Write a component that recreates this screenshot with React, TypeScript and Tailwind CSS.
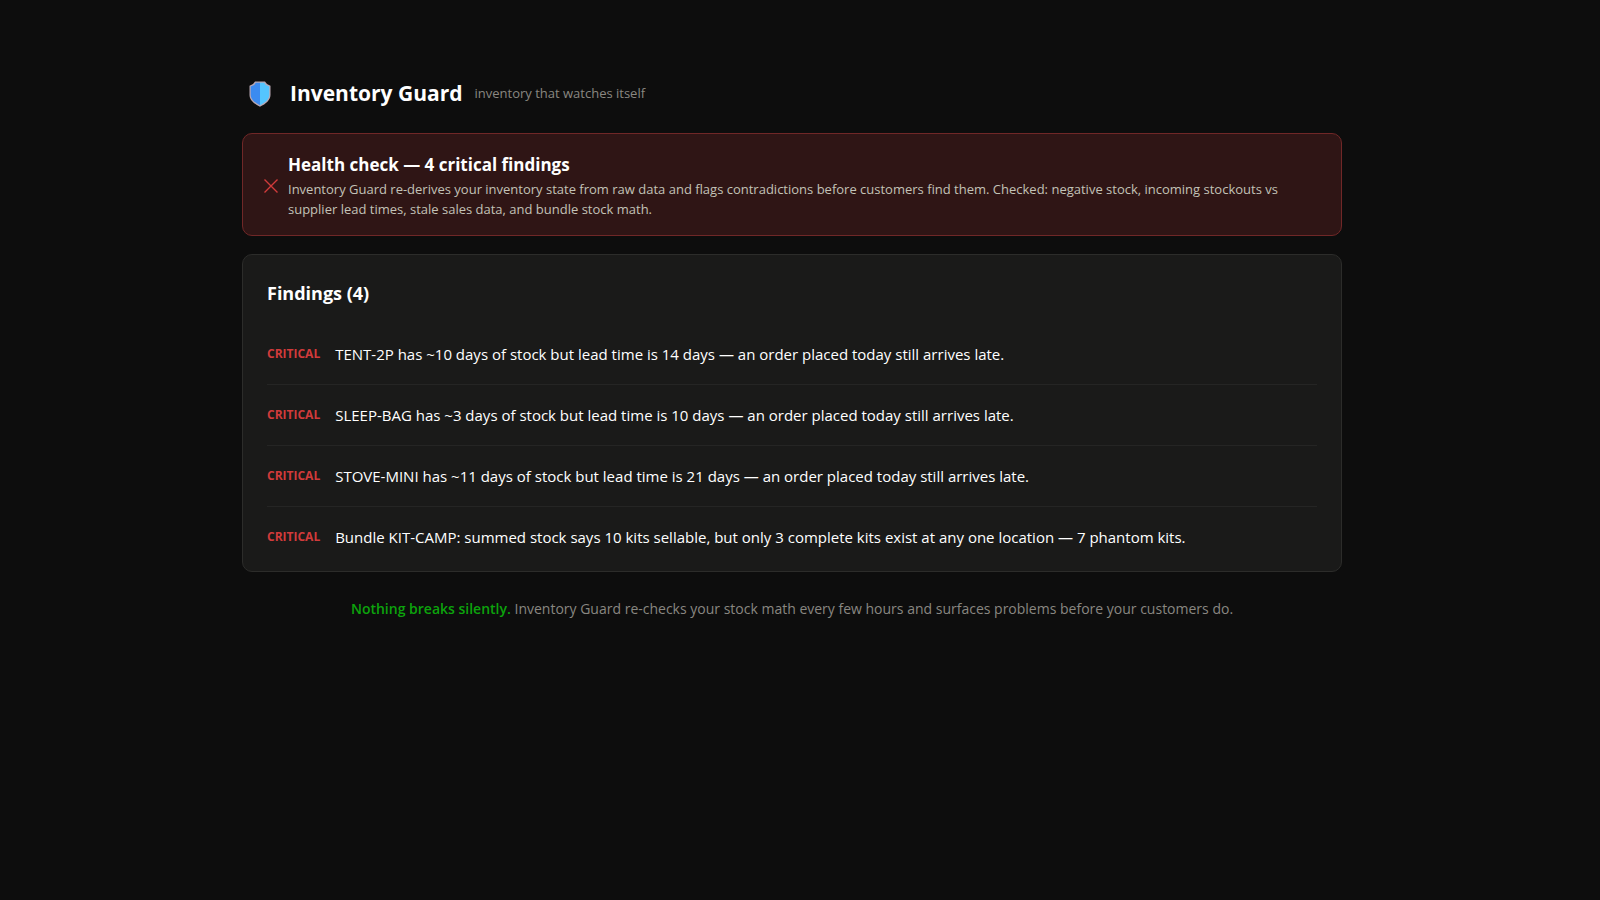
const findings = [
  "TENT-2P has ~10 days of stock but lead time is 14 days — an order placed today still arrives late.",
  "SLEEP-BAG has ~3 days of stock but lead time is 10 days — an order placed today still arrives late.",
  "STOVE-MINI has ~11 days of stock but lead time is 21 days — an order placed today still arrives late.",
  "Bundle KIT-CAMP: summed stock says 10 kits sellable, but only 3 complete kits exist at any one location — 7 phantom kits.",
];

function ShieldIcon() {
  return (
    <svg viewBox="0 0 22 26" className="w-[22px] h-[26px] shrink-0" aria-hidden="true">
      <path
        d="M6 0.5h10l2 2.500 3.500 1.800v9.200c0 4.800-4.500 9-10.500 11.700C5 23 .5 18.800.5 14V4.800L4 3z"
        fill="#b9a8b4"
      />
      <path d="M11 1.700H6.800L5.200 4 1.700 5.600V14c0 4 3.900 7.700 9.300 10.200z" fill="#3b8bf0" />
      <path d="M11 1.700h4.200L16.800 4l3.500 1.600V14c0 4-3.900 7.700-9.300 10.200z" fill="#54c5ff" />
    </svg>
  );
}

function CrossIcon() {
  return (
    <svg viewBox="0 0 14 14" className="w-3.5 h-3.5 shrink-0" aria-hidden="true">
      <path d="M0.500 0.500l13 13M13.500 0.500l-13 13" stroke="#d03b3b" strokeWidth="1.4" fill="none" />
    </svg>
  );
}

function Finding({ text }: { text: string }) {
  return (
    <li className="flex items-start gap-[15px] py-[18px] border-b border-[#252524] last:border-b-0">
      <span className="text-xs leading-6 font-bold text-[#d03b3b]">CRITICAL</span>
      <span className="text-[15px] leading-6 text-white">{text}</span>
    </li>
  );
}

export default function App() {
  return (
    <div className="min-h-screen bg-[#0d0d0d] pr-4 font-['Open_Sans','Noto_Sans',sans-serif]">
      <main className="max-w-[1100px] mx-auto pt-[72px] pb-12">
        <header className="flex items-center gap-[19px] h-11 pl-[7px]">
          <ShieldIcon />
          <div className="flex items-center gap-3 pb-0.5">
            <h1 className="text-[21px] leading-8 font-bold text-white">Inventory Guard</h1>
            <span className="text-[13px] leading-5 text-[#898781]">
              inventory that watches itself
            </span>
          </div>
        </header>

        <section className="mt-[17px] flex items-center gap-[10px] rounded-[10px] border border-[#702727] bg-[#2f1515] px-[21px] pt-[19px] pb-4">
          <CrossIcon />
          <div>
            <h2 className="text-[17px] leading-6 font-bold text-white">
              Health check — 4 critical findings
            </h2>
            <p className="mt-0.5 text-[13px] leading-5 text-[#c3c2b7]">
              Inventory Guard re-derives your inventory state from raw data and flags
              contradictions before customers find them. Checked: negative stock, incoming
              stockouts vs supplier lead times, stale sales data, and bundle stock math.
            </p>
          </div>
        </section>

        <section className="mt-[18px] rounded-[10px] border border-[#2c2c2a] bg-[#1a1a19] px-6 pt-[26px] pb-1">
          <h2 className="text-lg leading-6 font-bold text-white">Findings (4)</h2>
          <ul className="mt-[19px]">
            {findings.map((text) => (
              <Finding key={text} text={text} />
            ))}
          </ul>
        </section>

        <p className="mt-[25px] text-center text-sm leading-6 text-[#898781]">
          <strong className="font-semibold text-[#0ca30c]">Nothing breaks silently.</strong>{" "}
          Inventory Guard re-checks your stock math every few hours and surfaces problems before
          your customers do.
        </p>
      </main>
    </div>
  );
}
